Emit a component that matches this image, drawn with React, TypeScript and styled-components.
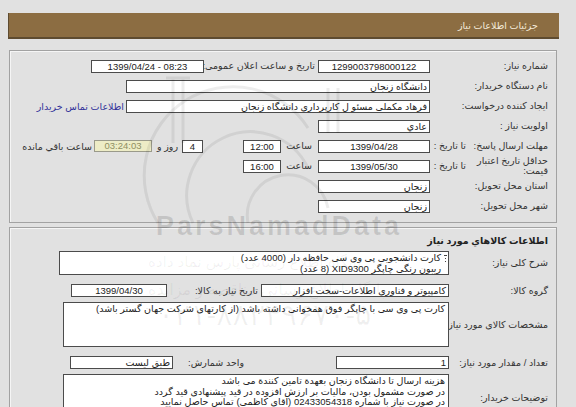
import React from 'react';
import styled, { createGlobalStyle } from 'styled-components';

const Global = createGlobalStyle`
  html, body { margin: 0; padding: 0; background: #e1e1e1; }
  body { margin: 8px; font-family: "Liberation Sans", "DejaVu Sans", sans-serif; }
`;

const Page = styled.div`
  position: relative;
  width: 551px;
  padding-top: 5px;
  direction: rtl;
  font-size: 9.5px;
  color: #333;
`;

const Header = styled.div`
  height: 24px;
  display: flex;
  align-items: center;
  padding-right: 21px;
  background: #8c6d42;
  border-left: 1px solid #5e4b30;
  border-bottom: 2px solid #5e4b30;
  color: #f3ead9;
  font-size: 9.5px;
`;

const Panel = styled.div<{ $top: number }>`
  margin: ${p => p.$top}px 2px 0 1px;
  border: 1px solid #a2a2a2;
  box-shadow: inset 1px 1px 0 #f5f5f5;
  padding: ${p => (p.$top > 8 ? '5px 8px 6px 8px' : '3px 8px 20px 8px')};
`;

const Row = styled.div<{ $h?: number; $mt?: number }>`
  display: flex;
  align-items: center;
  min-height: ${p => p.$h ?? 20}px;
  margin-top: ${p => p.$mt ?? 0}px;
`;

const Label = styled.div<{ $w?: number; $pr?: number }>`
  flex: none;
  ${p => (p.$w ? `width: ${p.$w}px;` : '')}
  padding-right: ${p => p.$pr ?? 0}px;
  box-sizing: border-box;
  text-align: right;
  white-space: nowrap;
  line-height: 10px;
`;

const Title = styled.div`
  height: 20px;
  line-height: 20px;
  font-weight: bold;
  color: #222;
`;

const Field = styled.div<{ $w: number; $center?: boolean }>`
  flex: none;
  width: ${p => p.$w}px;
  height: 13px;
  box-sizing: border-box;
  border: 1px solid #4b4b4b;
  background: #fff;
  padding: 0 2px;
  line-height: 11px;
  text-align: ${p => (p.$center ? 'center' : 'right')};
  white-space: nowrap;
  overflow: hidden;
  color: #222;
`;

const Countdown = styled.div`
  flex: none;
  width: 58px;
  height: 12px;
  box-sizing: border-box;
  border: 1px solid #9a9a8a;
  background: #edecc6;
  color: #8f8f62;
  line-height: 10px;
  text-align: center;
  margin-right: 1px;
`;

const Spacer = styled.div<{ $w: number }>`
  flex: none;
  width: ${p => p.$w}px;
`;

const Inline = styled.span<{ $mx?: number }>`
  white-space: nowrap;
  margin: 0 ${p => p.$mx ?? 0}px;
`;

const Link = styled.span`
  margin-right: 2px;
  color: #33339a;
  white-space: nowrap;
`;

const TextBox = styled.div<{ $w: number; $h: number }>`
  flex: none;
  position: relative;
  width: ${p => p.$w}px;
  height: ${p => p.$h}px;
  box-sizing: border-box;
  border: 1px solid #4b4b4b;
  background: #fff;
  padding: 1px 3px 0 3px;
  line-height: 10.5px;
  color: #222;
  text-align: right;
  overflow: hidden;
`;

const BoxText = styled.div`
  padding-right: 4px;
`;

const Grip = styled.span`
  position: absolute;
  right: 1px;
  top: 3px;
  width: 3px;
  height: 8px;
`;

const Overlay = styled.div`
  position: absolute;
  inset: 0;
  pointer-events: none;
  overflow: hidden;
`;

const Mark = styled.div<{ $x: number; $y: number; $size: number; $a: number }>`
  position: absolute;
  left: ${p => p.$x}px;
  top: ${p => p.$y}px;
  font-size: ${p => p.$size}px;
  line-height: 1;
  color: rgba(0, 0, 0, ${p => p.$a});
  white-space: nowrap;
`;

const BrandMark = styled(Mark)`
  font-family: "Liberation Sans", sans-serif;
  font-weight: bold;
  letter-spacing: 3px;
  direction: ltr;
`;

const Logo = styled.svg`
  position: absolute;
  left: 0;
  top: 0;
`;

export default function App() {
  return (
    <>
      <Global />
      <Page>
        <Header>جزئیات اطلاعات نیاز</Header>

        <Panel $top={11}>
          <Row>
            <Label $w={118}>شماره نیاز:</Label>
            <Field $w={112} $center dir="ltr">1299003798000122</Field>
            <Label $w={114} $pr={3}>تاریخ و ساعت اعلان عمومی:</Label>
            <Field $w={113} $center dir="ltr">1399/04/24 - 08:23</Field>
          </Row>
          <Row>
            <Label $w={118}>نام دستگاه خریدار:</Label>
            <Field $w={304}>دانشگاه زنجان</Field>
          </Row>
          <Row>
            <Label $w={118}>ایجاد کننده درخواست:</Label>
            <Field $w={304}>فرهاد مکملی مسئو ل کارپرداری دانشگاه زنجان</Field>
            <Link>اطلاعات تماس خریدار</Link>
          </Row>
          <Row>
            <Label $w={118}>اولویت نیاز :</Label>
            <Field $w={112}>عادي</Field>
          </Row>
          <Row>
            <Label $w={78}>مهلت ارسال پاسخ:</Label>
            <Label $w={40} $pr={4}>تا تاریخ :</Label>
            <Field $w={112} $center dir="ltr">1399/04/28</Field>
            <Label $w={37} $pr={6}>ساعت</Label>
            <Field $w={38} $center dir="ltr">12:00</Field>
            <Spacer $w={40} />
            <Field $w={21} $center>4</Field>
            <Inline $mx={4}>روز و</Inline>
            <Countdown dir="ltr">03:24:03</Countdown>
            <Inline $mx={2}>ساعت باقي مانده</Inline>
          </Row>
          <Row>
            <Label $w={78}>
              حداقل تاریخ اعتبار
              <br />
              قیمت:
            </Label>
            <Label $w={40} $pr={4}>تا تاریخ :</Label>
            <Field $w={112} $center dir="ltr">1399/05/30</Field>
            <Label $w={37} $pr={6}>ساعت</Label>
            <Field $w={38} $center dir="ltr">16:00</Field>
          </Row>
          <Row>
            <Label $w={118}>استان محل تحویل:</Label>
            <Field $w={112}>زنجان</Field>
          </Row>
          <Row>
            <Label $w={118}>شهر محل تحویل:</Label>
            <Field $w={112}>زنجان</Field>
          </Row>
        </Panel>

        <Panel $top={4}>
          <Title>اطلاعات کالاهاي مورد نياز</Title>
          <Row $h={23}>
            <Label $w={99}>شرح کلی نیاز:</Label>
            <TextBox $w={390} $h={24}>
              <Grip>
                <svg width="3" height="8" viewBox="0 0 3 8">
                  <rect x="0" y="0" width="3" height="1" fill="#444" />
                  <rect x="1" y="3" width="1" height="1" fill="#444" />
                  <rect x="1" y="6" width="1" height="1" fill="#444" />
                </svg>
              </Grip>
              <BoxText>
                کارت دانشجویی پی وی سی حافظه دار (4000 عدد)
                <br />
                ریبون رنگی چاپگر XID9300 (8 عدد)
              </BoxText>
            </TextBox>
          </Row>
          <Row $h={13} $mt={9}>
            <Label $w={99}>گروه کالا:</Label>
            <Field $w={188}>کامپیوتر و فناوری اطلاعات-سخت افزار</Field>
            <Label $w={94} $pr={3}>تاریخ نیاز به کالا:</Label>
            <Field $w={96} $center dir="ltr">1399/04/30</Field>
          </Row>
          <Row $mt={5}>
            <Label $w={99}>مشخصات کالای مورد نیاز:</Label>
            <TextBox $w={386} $h={45}>
              کارت پی وی سی با چاپگر فوق همخوانی داشته باشد (از کارتهای شرکت جهان گستر باشد)
            </TextBox>
          </Row>
          <Row $h={12} $mt={9}>
            <Label $w={99}>تعداد / مقدار مورد نیاز:</Label>
            <Field $w={113}>1</Field>
            <Label $w={163} $pr={92}>واحد شمارش:</Label>
            <Field $w={103}>طبق لیست</Field>
          </Row>
          <Row $mt={5}>
            <Label $w={99}>توضیحات خریدار:</Label>
            <TextBox $w={386} $h={48}>
              هزینه ارسال تا دانشگاه زنجان بعهدة تامین کنندة می باشد
              <br />
              در صورت مشمول بودن، مالیات بر ارزش افزوده در قید پیشنهادی قید گردد
              <br />
              در صورت نیاز با شماره 02433054318 (آقای کاظمی) تماس حاصل نمایید
            </TextBox>
          </Row>
        </Panel>

        <Overlay>
          <Logo width="551" height="420" viewBox="0 0 551 420">
            <g fill="none" stroke="rgba(0,0,0,0.07)" strokeWidth="3">
              <path d="M150 215 A85 85 0 0 1 300 120" />
              <path d="M185 215 A62 62 0 0 1 300 160" />
              <path d="M240 215 A40 40 0 0 1 320 200" />
              <path d="M165 70 L165 135 M175 70 L175 135 M158 70 L182 70" />
              <path d="M320 80 L320 125 M330 80 L330 125" />
            </g>
          </Logo>
          <BrandMark $x={148} $y={205} $size={27} $a={0.12}>ParsNamadData</BrandMark>
          <Mark $x={140} $y={246} $size={15} $a={0.06}>پایگاه اطلاع رسانی پارس نماد داده</Mark>
          <Mark $x={140} $y={274} $size={16} $a={0.06}>پایگاه اطلاع رسانی مناقصه و مزایده</Mark>
          <Mark $x={150} $y={292} $size={30} $a={0.06} dir="ltr">۰۲۱-۸۸۳۴۹۶۷۰-۵</Mark>
        </Overlay>
      </Page>
    </>
  );
}
